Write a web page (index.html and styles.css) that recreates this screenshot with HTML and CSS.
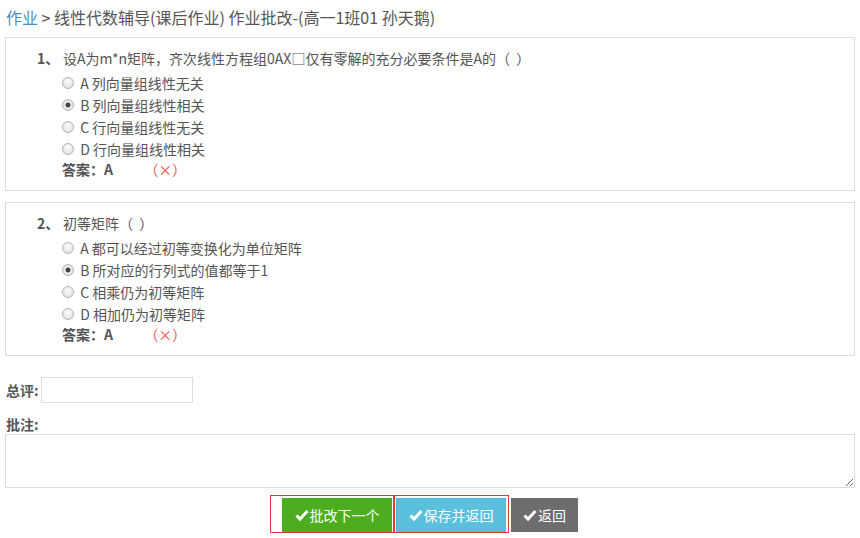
FILE: index.html
```html
<!DOCTYPE html>
<html lang="zh-CN">
<head>
  <meta charset="UTF-8" />
  <title>作业批改</title>
  <link rel="stylesheet" href="styles.css">
</head>
<body>
  <div class="crumb">
    <a href="#">作业</a> &gt; 线性代数辅导(课后作业) 作业批改-(高一1班01 孙天鹅)
  </div>

  <!-- 第1题 -->
  <div class="question">
    <div class="q-title"><span class="q-num">1、</span>设A为m*n矩阵，齐次线性方程组0AX□仅有零解的充分必要条件是A的（&nbsp; ）</div>
    <div class="options">
      <label class="option"><input type="radio" name="q1" disabled> A 列向量组线性无关</label>
      <label class="option"><input type="radio" name="q1" checked disabled> B 列向量组线性相关</label>
      <label class="option"><input type="radio" name="q1" disabled> C 行向量组线性无关</label>
      <label class="option"><input type="radio" name="q1" disabled> D 行向量组线性相关</label>
    </div>
    <div class="answer">答案：A <span class="wrong">（×）</span></div>
  </div>

  <!-- 第2题 -->
  <div class="question">
    <div class="q-title"><span class="q-num">2、</span>初等矩阵（&nbsp; ）</div>
    <div class="options">
      <label class="option"><input type="radio" name="q2" disabled> A 都可以经过初等变换化为单位矩阵</label>
      <label class="option"><input type="radio" name="q2" checked disabled> B 所对应的行列式的值都等于1</label>
      <label class="option"><input type="radio" name="q2" disabled> C 相乘仍为初等矩阵</label>
      <label class="option"><input type="radio" name="q2" disabled> D 相加仍为初等矩阵</label>
    </div>
    <div class="answer">答案：A <span class="wrong">（×）</span></div>
  </div>

  <div class="grade">
    <label for="score">总评:</label>
    <input type="text" id="score">
  </div>

  <div class="remark">
    <label for="note">批注:</label>
    <textarea id="note"></textarea>
  </div>

  <div class="btn-row">
    <button class="btn btn-green"><svg class="ok" viewBox="0 0 14 14"><path d="M1.5 7.5 L5 11 L12.5 3" /></svg>批改下一个</button>
    <button class="btn btn-blue"><svg class="ok" viewBox="0 0 14 14"><path d="M1.5 7.5 L5 11 L12.5 3" /></svg>保存并返回</button>
    <button class="btn btn-grey"><svg class="ok" viewBox="0 0 14 14"><path d="M1.5 7.5 L5 11 L12.5 3" /></svg>返回</button>
    <div class="mark mark-1"></div>
    <div class="mark mark-2"></div>
  </div>
</body>
</html>
```

FILE: styles.css
```css
* {
  box-sizing: border-box;
}
body {
  margin: 0;
  padding: 6px 5px;
  font-family: "Microsoft YaHei", "Noto Sans CJK SC", sans-serif;
  font-size: 14px;
  color: #555;
  background: #fff;
}

/* 面包屑 */
.crumb {
  font-size: 16px;
  line-height: 22px;
  padding-left: 1px;
  margin-bottom: 9px;
}
.crumb a {
  color: #4a8bc6;
  text-decoration: none;
}

/* 题目 */
.question {
  border: 1px solid #ddd;
  padding: 9px 0 12px 31px;
}
.question + .question {
  margin-top: 11px;
}
.q-title {
  line-height: 22px;
}
.q-num {
  display: inline-block;
  width: 26px;
  font-weight: bold;
}
.options {
  margin: 3px 0 0 25px;
}
.option {
  display: flex;
  align-items: center;
  height: 22px;
  white-space: pre;
}
.option input {
  appearance: none;
  -webkit-appearance: none;
  width: 12px;
  height: 12px;
  margin: 0 3px 0 0;
  border: 1px solid #b4b4b4;
  border-radius: 50%;
  background: radial-gradient(circle at 50% 35%, #fbfbfb, #dcdcdc);
  opacity: 1;
}
.option input:checked {
  background: radial-gradient(circle, #444 0, #444 2.2px, #eee 2.8px, #d8d8d8 100%);
}
.answer {
  margin-left: 25px;
  line-height: 18px;
  font-weight: bold;
}
.wrong {
  margin-left: 28px;
  color: #e8544f;
  font-weight: normal;
}

/* 总评 / 批注 */
.grade {
  display: flex;
  align-items: center;
  margin-top: 21px;
}
.grade label,
.remark label {
  font-weight: bold;
  padding-left: 1px;
}
.grade input {
  width: 152px;
  height: 26px;
  margin-left: 2px;
  border: 1px solid #ddd;
}
.remark {
  margin-top: 11px;
}
.remark label {
  display: block;
  line-height: 20px;
}
.remark textarea {
  display: block;
  width: 100%;
  height: 54px;
  border: 1px solid #ddd;
  margin: 0;
}

/* 按钮 */
.btn-row {
  position: relative;
  display: flex;
  justify-content: center;
  gap: 4px;
  margin-top: 10px;
}
.btn {
  height: 34px;
  border: none;
  color: #fff;
  font-family: inherit;
  font-size: 14px;
  display: flex;
  align-items: center;
  justify-content: center;
  padding: 0;
  cursor: pointer;
}
.btn .ok {
  width: 14px;
  height: 14px;
  margin-right: 1px;
  fill: none;
  stroke: #fff;
  stroke-width: 3;
}
.btn-green {
  width: 110px;
  background: #4cae1e;
}
.btn-blue {
  width: 110px;
  background: #5bc0de;
  border: 1px solid #46b8da;
}
.btn-grey {
  width: 67px;
  margin-left: 1px;
  background: #6d6d6d;
}

/* 红色标记框 */
.mark {
  position: absolute;
  top: -3px;
  height: 38px;
  border: 1px solid #e53935;
  pointer-events: none;
}
.mark-1 {
  left: 265px;
  width: 124px;
}
.mark-2 {
  left: 389px;
  width: 115px;
}
```
